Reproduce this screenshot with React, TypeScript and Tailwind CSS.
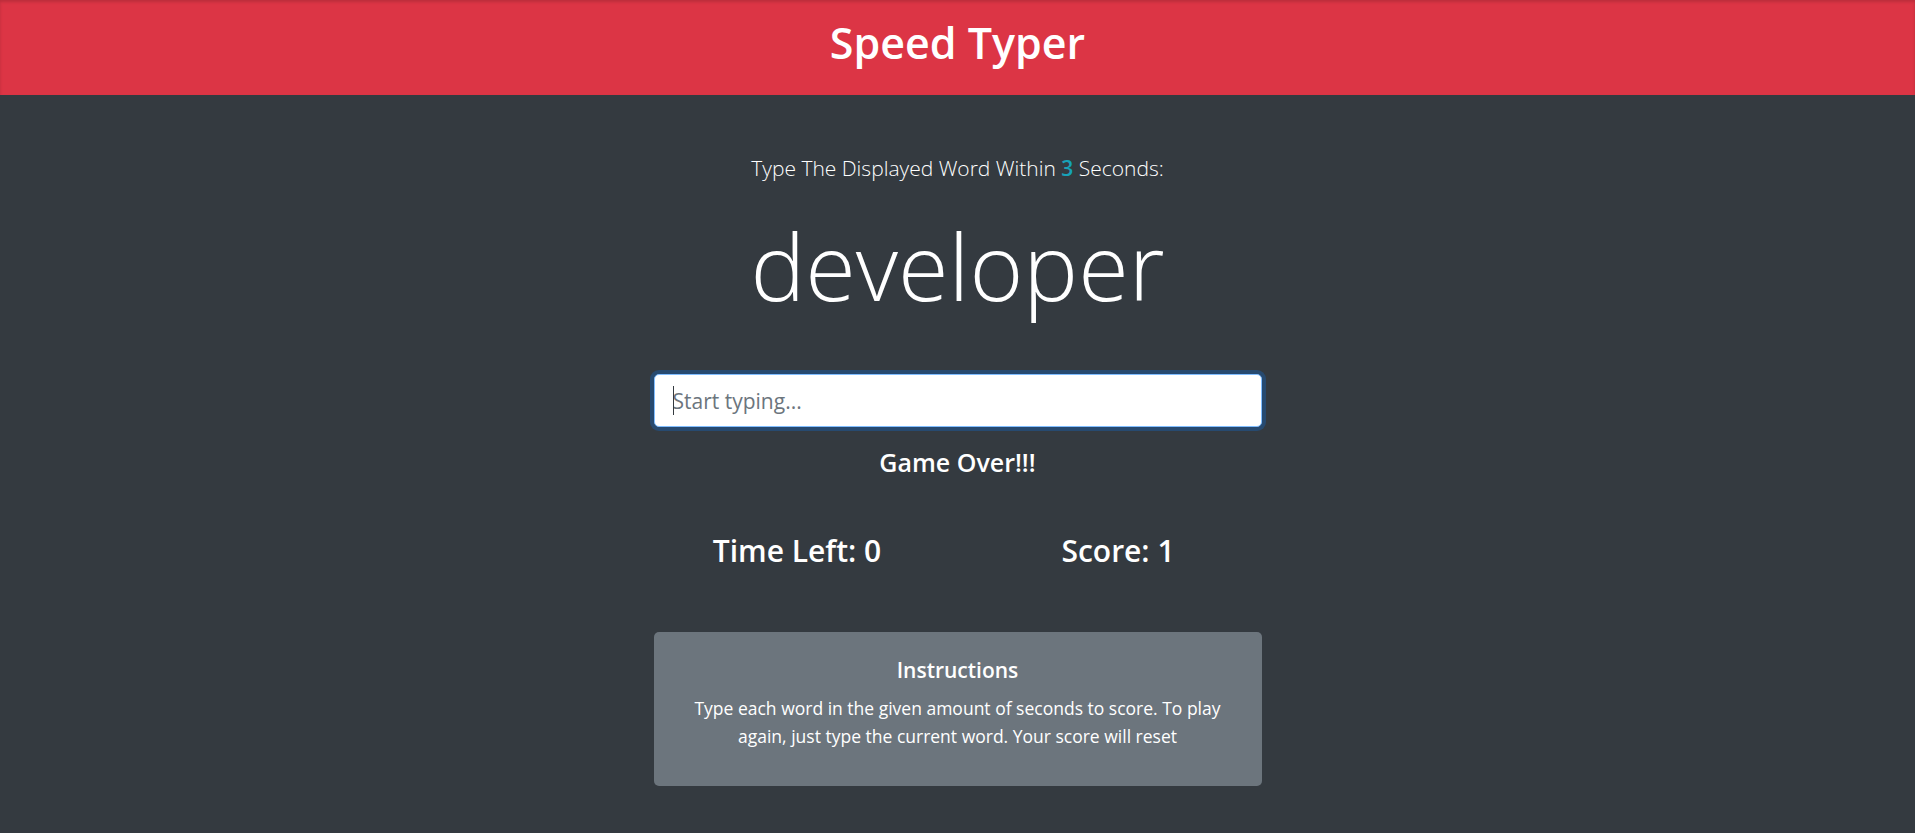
import { useState } from 'react'

const font = { fontFamily: '"Open Sans", "Noto Sans", sans-serif' }

export default function App() {
  const [text, setText] = useState('')
  const seconds = 3
  const word = 'developer'

  return (
    <div className="min-h-[833px] bg-[#343a40] text-white" style={font}>
      <header className="h-[95px] bg-[#dc3545] text-center shadow-[inset_0_2px_3px_rgba(0,0,0,0.15)]">
        <h1 className="pt-[17px] text-[43px] leading-[52px] font-semibold">Speed Typer</h1>
      </header>

      <main className="mx-auto w-[608px] text-center">
        <p className="mt-[57px] text-[21px] leading-[33px] font-light">
          Type The Displayed Word Within <span className="font-semibold text-[#17a2b8]">{seconds}</span> Seconds:
        </p>

        <h2 className="mt-[26px] text-[92px] leading-[110px] font-light">{word}</h2>

        <div className="relative mt-[53px]">
          <input
            type="text"
            autoFocus
            value={text}
            onChange={(e) => setText(e.target.value)}
            placeholder="Start typing..."
            className="block h-[53px] w-full rounded-[5px] border border-[#80bdff] bg-white px-[18px] text-[21px] text-[#495057] placeholder:text-[#6c757d] outline-none shadow-[0_0_0_4px_rgba(0,123,255,0.25)]"
          />
          {text === '' && (
            <span className="pointer-events-none absolute left-[19px] top-[12px] h-[29px] w-[1.5px] bg-[#343a40]" />
          )}
        </div>

        <h5 className="mt-[22px] text-[25px] leading-[27px] font-semibold">Game Over!!!</h5>

        <div className="-mx-[17px] mt-[57px] grid grid-cols-2">
          <h3 className="text-[30px] leading-[36px] font-semibold">Time Left: 0</h3>
          <h3 className="text-[30px] leading-[36px] font-semibold">Score: 1</h3>
        </div>

        <div className="mt-[63px] h-[154px] rounded-[5px] bg-[#6c757d] px-[23px] pt-[26px]">
          <h5 className="text-[21px] leading-[24px] font-semibold">Instructions</h5>
          <p className="mt-[13px] text-[17.5px] leading-[27.5px]">
            Type each word in the given amount of seconds to score. To play again, just type the current word. Your score will reset
          </p>
        </div>
      </main>
    </div>
  )
}
